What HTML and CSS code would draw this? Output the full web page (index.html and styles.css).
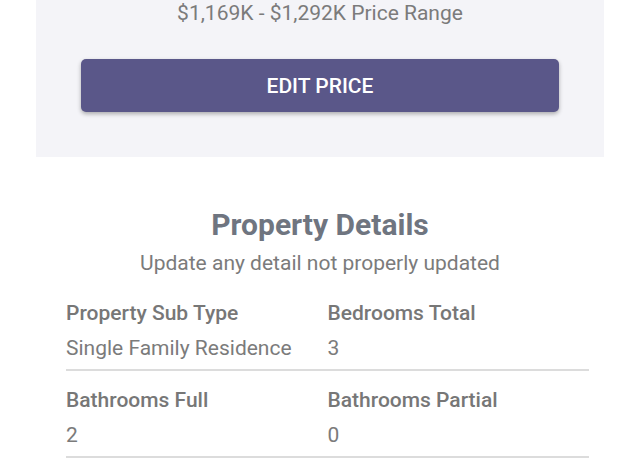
FILE: index.html
```html
<!DOCTYPE html>
<html>
<head>
<meta charset="utf-8">
<link rel="stylesheet" href="styles.css">
</head>
<body>
<div class="price-card">
  <div class="price-range">$1,169K - $1,292K Price Range</div>
  <button class="edit-btn">EDIT PRICE</button>
</div>
<section class="details">
  <h2 class="details-title">Property Details</h2>
  <p class="details-sub">Update any detail not properly updated</p>
  <div class="grid">
    <div class="row">
      <div class="cell"><div class="label">Property Sub Type</div><div class="value">Single Family Residence</div></div>
      <div class="cell"><div class="label">Bedrooms Total</div><div class="value">3</div></div>
    </div>
    <div class="row">
      <div class="cell"><div class="label">Bathrooms Full</div><div class="value">2</div></div>
      <div class="cell"><div class="label">Bathrooms Partial</div><div class="value">0</div></div>
    </div>
  </div>
</section>
</body>
</html>
```
FILE: styles.css
```css
html, body {
  margin: 0;
  padding: 0;
  background: #ffffff;
  font-family: Roboto, "Liberation Sans", sans-serif;
}
.price-card {
  margin: 0 36px;
  background: #f4f4f8;
  padding: 1px 45px 45px;
  display: flex;
  flex-direction: column;
}
.price-range {
  text-align: center;
  font-size: 21px;
  line-height: 24px;
  color: #7b7b7b;
  margin-top: 0;
  margin-bottom: 34px;
}
.edit-btn {
  height: 53px;
  border: none;
  border-radius: 5px;
  background: #5a5789;
  color: #ffffff;
  font-family: Roboto, "Liberation Sans", sans-serif;
  font-weight: 500;
  font-size: 21px;
  box-shadow: 0 2px 4px rgba(0,0,0,0.3);
}
.details {
  margin: 0 36px;
}
.details-title {
  margin: 51px 0 0;
  text-align: center;
  font-size: 30px;
  line-height: 34px;
  font-weight: 700;
  color: #6f7580;
}
.details-sub {
  margin: 9px 0 0;
  text-align: center;
  font-size: 21px;
  line-height: 24px;
  color: #7b7b7b;
}
.grid {
  display: flex;
  flex-direction: column;
  margin: 9px 15px 0 30px;
}
.row {
  display: grid;
  grid-template-columns: 1fr 1fr;
  padding: 17px 0 9px;
  border-bottom: 2px solid #dcdcdc;
}
.label {
  font-size: 21px;
  line-height: 24px;
  font-weight: 500;
  color: #777777;
}
.value {
  margin-top: 11px;
  font-size: 21px;
  line-height: 24px;
  color: #7b7b7b;
}
```
